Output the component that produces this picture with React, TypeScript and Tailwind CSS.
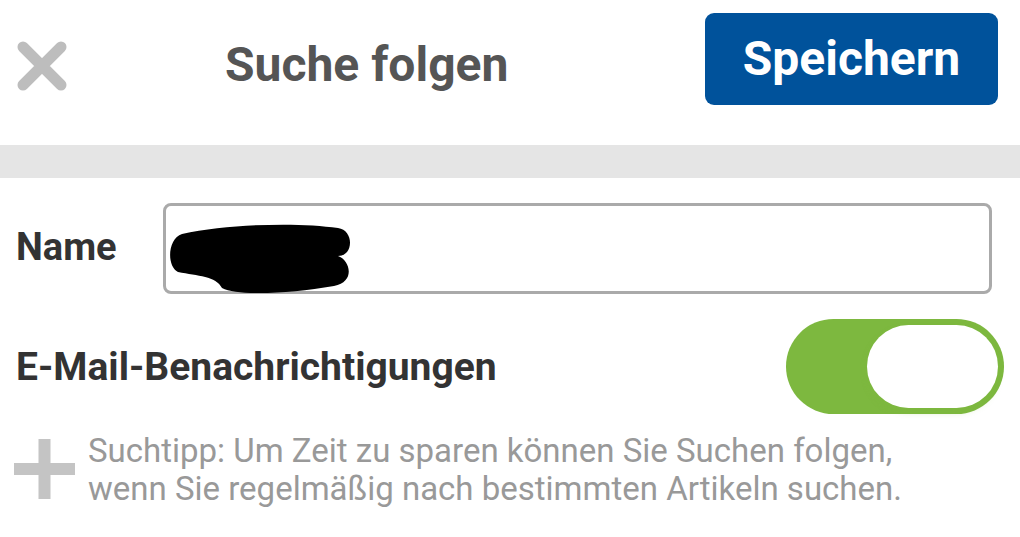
import { useState } from "react";

const font = { fontFamily: "Roboto, 'Noto Sans', sans-serif" };

export default function App() {
    const [notify, setNotify] = useState(true);

    return (
        <div className="w-[1020px] h-[537px] bg-white overflow-hidden" style={font}>
            {/* header */}
            <div className="flex items-start h-[145px] pt-[13px] pl-[16px] pr-[22px]">
                <button className="mt-[27px] w-[52px] h-[52px] flex items-center justify-center">
                    <svg width="52" height="52" viewBox="0 0 52 52">
                        <path d="M7 7 L45 45 M45 7 L7 45" stroke="#bdbdbd" strokeWidth="11" strokeLinecap="round" />
                    </svg>
                </button>
                <h1 className="ml-[157px] mt-[25px] text-[48px] leading-[54px] font-bold text-[#555555]">Suche folgen</h1>
                <button className="ml-auto w-[293px] h-[92px] rounded-[9px] bg-[#00529b] text-white text-[48px] font-bold leading-none">
                    Speichern
                </button>
            </div>
            <div className="h-[33px] bg-[#e5e5e5]" />

            {/* form */}
            <div className="pl-[16px] pr-[28px]">
                <div className="flex items-center mt-[25px]">
                    <label htmlFor="name" className="w-[147px] text-[38px] leading-[44px] font-bold text-[#333333] -mt-[4px]">Name</label>
                    <div className="relative flex-1 h-[91px] border-[3px] border-[#aaaaaa] rounded-[8px]">
                        <input id="name" className="w-full h-full bg-transparent outline-none px-4 text-[30px]" />
                        <svg className="absolute left-[2px] top-[10px]" width="194" height="78" viewBox="0 0 194 78">
                            <path d="M14 18 C60 8 130 6 170 12 C186 14 186 40 170 40 C182 44 188 66 166 70 C120 78 70 80 54 72 C48 60 30 60 10 56 C-2 50 0 22 14 18 Z" fill="#000" />
                        </svg>
                    </div>
                </div>

                <div className="flex items-center justify-between mt-[25px] mr-[-12px]">
                    <span className="text-[39px] leading-[46px] font-bold text-[#333333]">E-Mail-Benachrichtigungen</span>
                    <button
                        onClick={() => setNotify(!notify)}
                        className="w-[218px] h-[95px] rounded-full bg-[#7db83f] flex items-center px-[6px] justify-end"
                    >
                        <span className="w-[131px] h-[83px] rounded-full bg-white shadow-[0_4px_6px_rgba(125,184,63,0.35)]" />
                    </button>
                </div>

                <div className="flex items-start mt-[18px]">
                    <svg className="mt-[7px] -ml-[2px] shrink-0" width="61" height="60" viewBox="0 0 61 60">
                        <path d="M30.5 0 V60 M0 30 H61" stroke="#c4c4c4" strokeWidth="12" />
                    </svg>
                    <p className="ml-[13px] text-[33px] leading-[38px] text-[#999999]">
                        Suchtipp: Um Zeit zu sparen können Sie Suchen folgen,<br />
                        wenn Sie regelmäßig nach bestimmten Artikeln suchen.
                    </p>
                </div>
            </div>
        </div>
    );
}
